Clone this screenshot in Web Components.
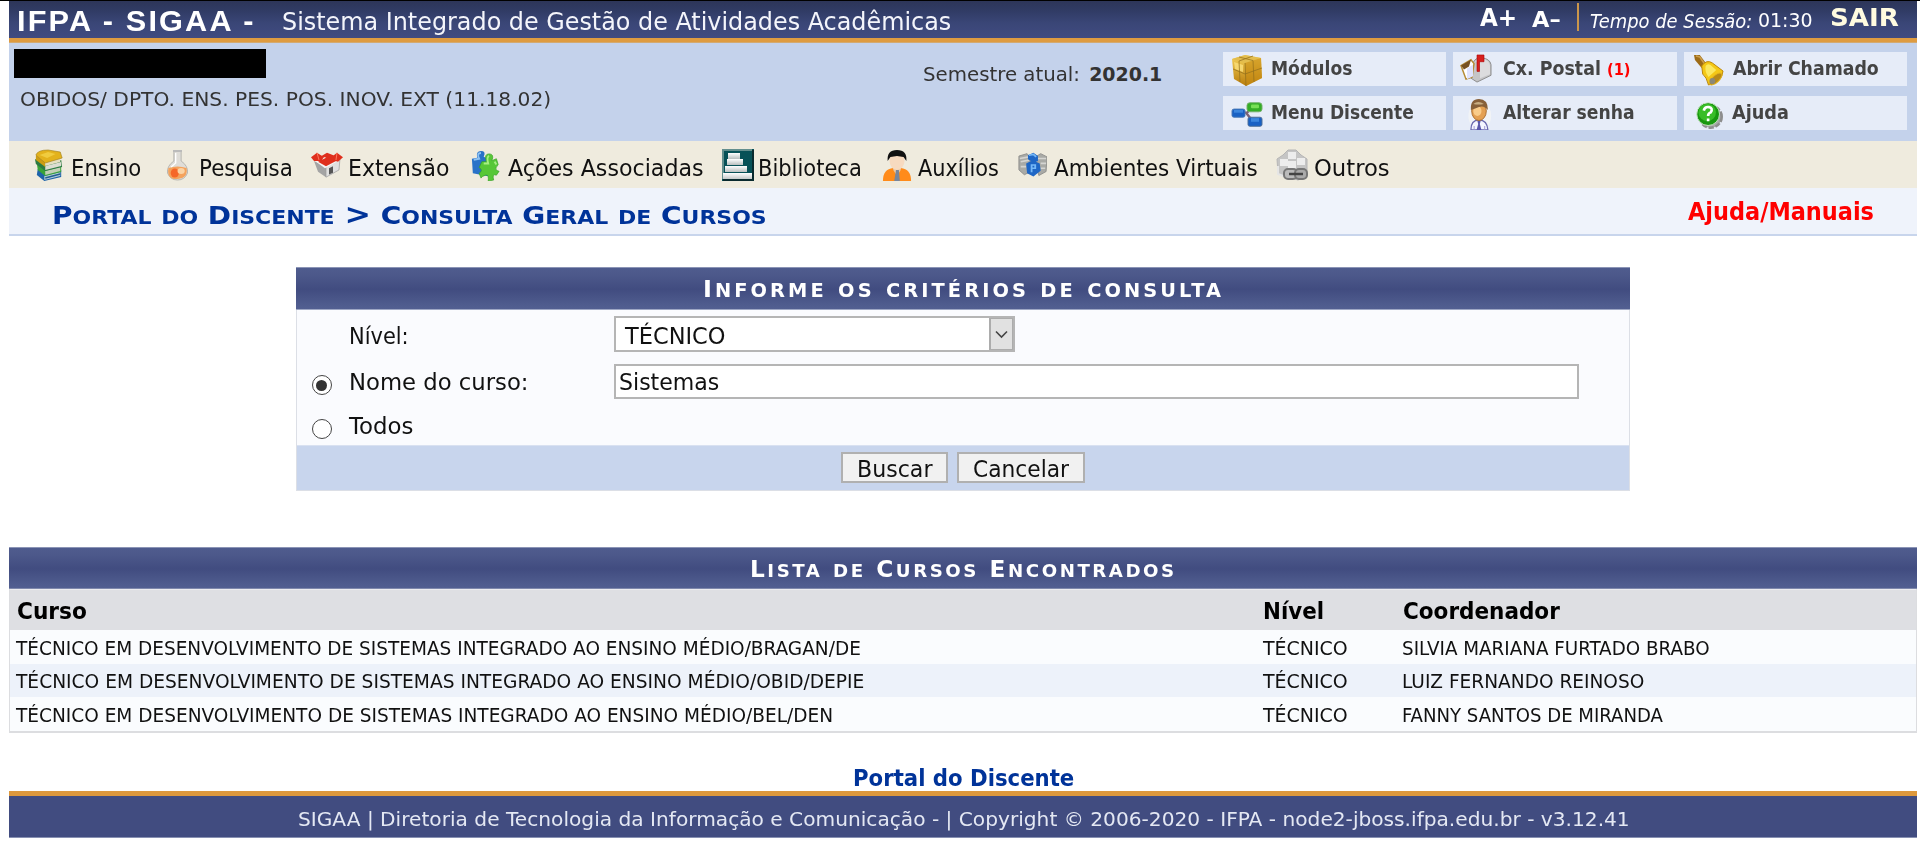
<!DOCTYPE html>
<html lang="pt-BR">
<head>
<meta charset="utf-8">
<title>SIGAA - Consulta Geral de Cursos</title>
<style>
html,body{margin:0;padding:0;background:#fff;overflow:hidden}
body{font-family:"DejaVu Sans",Verdana,sans-serif;color:#111}
</style>
</head>
<body>
<sigaa-page></sigaa-page>
<script>
// Text run with a fixed width: b = baseline inside the row, s = size, w = width, l = gap before.
class FitText extends HTMLElement{
  constructor(){super();this.attachShadow({mode:'open'}).innerHTML=`<style>
  :host{display:block;flex:none;white-space:nowrap}
  span{display:inline-block;transform-origin:0 0;white-space:nowrap;vertical-align:top}
  :host([bold]) span{font-weight:bold}
  :host([it]) span{font-style:italic}
  :host([arial]) span{font-family:"Liberation Sans",Arial,sans-serif;letter-spacing:.07em}
  :host([cond]) span{font-family:"DejaVu Sans Condensed","DejaVu Sans",sans-serif}
  </style><span><slot></slot></span>`;}
  connectedCallback(){
    const n=k=>parseFloat(this.getAttribute(k)||0),s=n('s')*1.025,w=n('w')-1.5,t=this.shadowRoot.querySelector('span');
    this.style.cssText+=`width:${w}px;height:${s}px;font-size:${s}px;line-height:${s}px;margin-left:${n('l')+.7}px;margin-right:.8px;margin-top:${n('b')+.6-.846*s}px`;
    t.style.transform=`scaleX(${w/t.offsetWidth})`;
  }
}
// Heading whose lowercase letters are capitals at 80% of the size.
class CapsTitle extends HTMLElement{
  constructor(){super();this.attachShadow({mode:'open'});}
  connectedCallback(){
    const words=this.textContent.trim().split(' ').map(w=>`<i class="${/^[A-Z]/.test(w)?'c':''}">${w.replace('>','&gt;')}</i>`).join(' ');
    const n=k=>parseFloat(this.getAttribute(k)||0),s=n('s'),w=n('w');
    this.shadowRoot.innerHTML=`<style>
    :host{display:block;flex:none;white-space:nowrap;width:${w}px;height:${s}px;margin-left:${n('l')}px;margin-top:${n('b')-.846*s}px}
    div{display:inline-block;transform-origin:0 0;font-size:${s}px;line-height:${s}px;font-weight:bold;letter-spacing:${n('ls')}px;vertical-align:top}
    i{font-style:normal;display:inline-block;font-variant-caps:small-caps;font-size:1.13em;line-height:0}
    .c::first-letter{font-size:.885em}</style><div>${words}</div>`;
    const t=this.shadowRoot.querySelector('div');t.style.transform=`scaleX(${w/(t.offsetWidth-n('ls'))})`;
  }
}
const ICONS={
box:`<defs><linearGradient id="a" x2="0" y2="1"><stop stop-color="#f6d35c"/><stop offset="1" stop-color="#b87c0c"/></linearGradient></defs><path d="M1 5 14 1 30 4 31 24 15 32 3 25Z" fill="url(#a)"/><path d="M1 5 14 1 30 4 14 9Z" fill="#e3bd4e"/><path d="M14 9 30 4 31 24 15 32Z" fill="#c68b12" opacity=".6"/><path d="M3 8 12 11 12 18 4 15Z" fill="#fbe07c" opacity=".8"/><path d="M14 9 15 32M2 15 14 20 31 14M8 3 22 6.500 23 28M22 2 8 7 9 28" fill="none" stroke="#94701c" stroke-width="1" opacity=".75"/>`,
tree:`<path d="M12 14H16L21 9M15 14 22 24" fill="none" stroke="#7b6478" stroke-width="2.500"/><rect x="1" y="10" width="13" height="9" rx="2" fill="#1961c4" stroke="#4b79b6"/><rect x="3" y="11" width="9" height="3" fill="#3c86dd"/><rect x="16" y="3" width="15" height="10" rx="3" fill="#34ad26" stroke="#73af6a"/><rect x="20" y="5" width="8" height="4" rx="1" fill="#77df55"/><rect x="17" y="19" width="14" height="10" rx="2" fill="#1961c4" stroke="#516f96"/><rect x="20" y="20" width="8" height="4" fill="#3c86dd"/>`,
mail:`<path d="M13 10Q16 4 22 5Q30 6 31 12V23L17 30 11 26Z" fill="#c5c5c7" stroke="#8c8c8c"/><path d="M22 6Q29 7 30 13V22L20 26V14Q19 9 15 9Q18 5 22 6Z" fill="#dcdcde"/><path d="M1 13 11 7 14 11 12 25 6 27Z" fill="#fff" stroke="#b58b36" stroke-width="1.500"/><path d="M1 13 11 7 9 14 4 17Z" fill="#765022"/><path d="M7 16 13 12 13 24 7 27Z" fill="#dfe3ff"/><path d="M17 19V2H24V9H19.500V19Z" fill="#d71f1d" stroke="#a00" stroke-width=".6"/>`,
user:`<ellipse cx="17" cy="18" rx="14" ry="14" fill="#f7f7f4" opacity=".65"/><path d="M6 32Q6 22 16 22T27 32Z" fill="#f4f5ff" stroke="#6a68ae" stroke-width="1.500"/><path d="M14 23H18L17 26 19 32H13L15 26Z" fill="#5b58ac"/><path d="M10 28V32M23 28V32" stroke="#9693d0"/><ellipse cx="16" cy="13" rx="9" ry="9.500" fill="#e4a052" stroke="#a66a2c"/><ellipse cx="14" cy="13" rx="5" ry="5" fill="#f9cc8a"/><path d="M6 12Q5 1 16 1T27 12Q22 7 16 9T6 12Z" fill="#876039"/><path d="M9 6Q15 2 22 6 15 7 9 6Z" fill="#c7ad83"/>`,
bell:`<path d="M1 1 7 1 14 10 9 14 2 6Z" fill="#9d6b17"/><path d="M3 2 7 3 12 10" fill="none" stroke="#cda04c" stroke-width="1.500"/><path d="M9 12Q14 5 20 9L31 17Q30 28 16 31Q14 23 10 20Z" fill="#f4c816" stroke="#bb850b"/><path d="M13 12Q15 9 18 11L24 16 16 23Q12 18 13 12Z" fill="#fbe860"/><ellipse cx="23.500" cy="25" rx="8" ry="3.500" transform="rotate(-42 23.500 25)" fill="#b78a18" stroke="#e3b21d"/><ellipse cx="20" cy="27" rx="3" ry="3" fill="#8b8878"/>`,
help:`<circle cx="18" cy="18" r="12.500" fill="#aaa"/><circle cx="18" cy="18" r="12.500" fill="none" stroke="#8d8d8d" stroke-width="3" stroke-dasharray="6 2"/><circle cx="15" cy="15" r="13" fill="#18970f" stroke="#d5ead2"/><ellipse cx="14" cy="13" rx="10" ry="10" fill="#38bd27"/><path d="M10 11Q11 6 16 7T18 13Q15 14 15 17M15 20V23" fill="none" stroke="#fff" stroke-width="3"/>`,
books:`<path d="M4 20 15 25 29 21V28L11 32 3 26Z" fill="#1e63a9"/><path d="M11 27 28 23V27L11 31Z" fill="#b4cbd6"/><path d="M12 29 28 25" stroke="#225f91" stroke-width="1.500"/><path d="M3 14 14 20 29 16V23L12 27 4 21Z" fill="#39a33a"/><path d="M12 22 28 18V22L12 26Z" fill="#c2cfb6"/><path d="M1 10 13 16 29 11 30 18 12 22 2 15Z" fill="#2c7a42"/><path d="M12 17 29 13V17L12 21Z" fill="#dcddd2"/><path d="M2 6 12 13V18L2 11Z" fill="#cc9d14"/><path d="M12 13 28 9V13L12 17Z" fill="#e5dfc2"/><path d="M2 6Q4 1 15 1L28 3 30 9 12 14Z" fill="#e3b21c" stroke="#a48422" stroke-width=".7"/><path d="M6 6 15 3 23 5 14 9Z" fill="#f0cc3f"/>`,
flask:`<path d="M12 2H20V12Q28 17 27 24Q24 31 16 31T5 24Q4 17 12 12Z" fill="#dfddd8" stroke="#b5b3ae" stroke-width="1"/><path d="M6 19Q16 16 26 19Q28 29 16 30T6 19Z" fill="#f4a25c"/><circle cx="13" cy="24" r="4.500" fill="#f5571c" opacity=".8"/><ellipse cx="20" cy="22" rx="4" ry="3" fill="#fbd3a4"/><path d="M11 2H21" stroke="#bbb" stroke-width="2"/><path d="M14 4V14L9 18" fill="none" stroke="#fff" stroke-width="1.500"/>`,
house:`<path d="M3 12 15 18V30L7 24Z" fill="#a4a4a4"/><path d="M15 16 29 9 28 22 15 30Z" fill="#e0e0e0" stroke="#999" stroke-width=".7"/><path d="M4 12 15 8 27 12 14 20Z" fill="#f5f5f5"/><path d="M0 8 6 3 13 8 10 12 3 12ZM10 7 16 3 23 6 20 10ZM18 10 26 3 32 8 27 13ZM7 13 16 8 25 12 15 18Z" fill="#df2f1d"/><path d="M6 3 8 11M26 3 25 11" stroke="#ff7a60"/><path d="M18 20 22 18V25L18 27Z" fill="#555"/>`,
puzzle:`<path d="M1 9 7 8Q5 1 11 1T14 7L19 9V27L2 24Z" fill="#2972c8"/><path d="M3 10 9 9Q6 3 11 3" fill="none" stroke="#8ec2f2" stroke-width="2"/><path d="M12 12 17 12Q14 4 20 4T23 11L28 9 30 15Q26 19 28 21L31 22 28 26Q23 24 25 31L19 32Q20 25 16 26T11 29L9 24Q14 21 9 18Z" fill="#57c737" stroke="#32a022" stroke-width=".7"/><path d="M14 14 19 14Q17 7 20 6M26 12 28 15" fill="none" stroke="#a7ef83" stroke-width="2"/>`,
biblio:`<defs><linearGradient id="g" x2="0" y2="1"><stop stop-color="#fff"/><stop offset="1" stop-color="#b9bfbf"/></linearGradient></defs><path d="M0 0H32V32H0Z" fill="#075157"/><path d="M0 0H30V2H2V30H0Z" fill="#638e8d"/><rect x="6" y="4" width="12" height="6" fill="url(#g)"/><rect x="5" y="10" width="16" height="6" fill="url(#g)"/><rect x="3" y="17" width="22" height="6" fill="url(#g)"/><rect x="1" y="24" width="29" height="7" fill="url(#g)"/><path d="M31 1V31H1" fill="none" stroke="#092a2e" stroke-width="2"/>`,
aux:`<path d="M1 32Q1 20 12 19H20Q31 20 31 32Z" fill="#ff8b1a"/><path d="M12 14H20V21L16 27 12 21Z" fill="#e9c6a2"/><path d="M15 21H18L19 32H13Z" fill="#78869d"/><ellipse cx="16" cy="12" rx="8" ry="9" fill="#f7dac0"/><path d="M6 12Q5 1 16 1T26 12L23 8 16 7 9 8Z" fill="#111"/>`,
virtual:`<path d="M1 5 10 2 14 8V24L7 28 1 22ZM18 7 25 2 32 6 31 24 23 29Z" fill="#a9aaa6" stroke="#8b8b88"/><path d="M2 8 12 6M3 12 12 10M3 18H9M22 8H31M25 14H31M25 20H30" stroke="#d5d5d2" stroke-width="2"/><path d="M11 4 17 1 22 5V11L17 13 11 9ZM9 14 16 10 24 14 25 23 17 30 10 26Z" fill="#1e66c5"/><path d="M12 4 17 3 20 6M15 25V16H19V20H16" fill="none" stroke="#75b8f7" stroke-width="2"/>`,
outros:`<path d="M1 10 7 6 12 1H20L25 6 31 10V27L22 31 2 25Z" fill="#c5c5c5" stroke="#b5b5b5"/><path d="M4 10H12V17H4ZM12 3H20V10H12ZM21 9H29V16H21ZM12 12H20V19H12Z" fill="#ededed"/><path d="M2 17V25L10 28" stroke="#e5e5e5" fill="none" stroke-width="2"/><rect x="8" y="20" width="13" height="10" rx="4" fill="#bbb" stroke="#777" stroke-width="2"/><rect x="19" y="20" width="12" height="10" rx="4" fill="#aaa" stroke="#777" stroke-width="2"/><path d="M13 25H27" stroke="#444" stroke-width="2.500"/>`};
// Icon with its box: x gap before (l), top (t), width and height.
class SgIcon extends HTMLElement{
  constructor(){super();this.attachShadow({mode:'open'});}
  connectedCallback(){const g=k=>this.getAttribute(k)||0;
  this.shadowRoot.innerHTML=`<style>:host{display:block;flex:none;margin-left:${g('l')}px;margin-top:${g('t')}px;width:${g('w')}px;height:${g('h')}px}svg{display:block;filter:blur(.4px)}</style><svg width="${g('w')}" height="${g('h')}" viewBox="0 0 32 32" preserveAspectRatio="none">${ICONS[g('name')]}</svg>`;}
}
const row='display:flex;align-items:flex-start;box-sizing:border-box;overflow:hidden;';
const define=(name,css,html)=>customElements.define(name,class extends HTMLElement{constructor(){super();const t=document.createElement('template');t.innerHTML=`<style>${css}</style>${html}`;this.attachShadow({mode:'open'}).append(t.content.cloneNode(true));}});
customElements.define('fit-text',FitText);customElements.define('caps-title',CapsTitle);customElements.define('sg-icon',SgIcon);

define('top-bar',`:host{${row}height:37px;background:linear-gradient(#2d3659,#303b64 25%,#3a4677 60%,#404b80);color:#fff}
.sep{flex:none;width:1.500px;height:28px;margin:2px 0 0 16px;background:#cb964b}.sair{color:#fffbe0}`,
`<fit-text arial bold s="28" b="29.500" l="7" w="240">IFPA - SIGAA -</fit-text>
<fit-text s="24" b="29.500" l="25" w="671" style="color:#f4f5fb">Sistema Integrado de Gestão de Atividades Acadêmicas</fit-text>
<fit-text bold s="24" b="25.500" l="527.500" w="39">A+</fit-text><fit-text bold s="20" b="25.500" l="13" w="30">A–</fit-text>
<div class="sep"></div><fit-text it s="18.500" b="26" l="10" w="164">Tempo de Sessão:</fit-text><fit-text s="19" b="26" l="4.500" w="56">01:30</fit-text>
<fit-text class="sair" bold cond s="24" b="25.500" l="16" w="70">SAIR</fit-text>`);

define('quick-link',`:host{${row}height:34px;background:#e6ecf8;color:#444}`,`<slot></slot>`);
define('user-panel',`:host{${row}height:98px;background:#c4d2eb;color:#333}
.id{width:908px;flex:none}.mask{width:252px;height:29px;margin:6px 0 0 5px;background:#000}.unit{height:40px;display:flex}
.links{display:grid;grid-template-columns:223px 224.500px 223px;column-gap:7px;row-gap:10px;margin:9px 0 0 60px}`,
`<div class="id"><div class="mask"></div><div class="unit"><fit-text s="18.500" b="27" l="10" w="533">OBIDOS/ DPTO. ENS. PES. POS. INOV. EXT (11.18.02)</fit-text></div></div>
<fit-text s="18.500" b="37" l="5.500" w="159">Semestre atual:</fit-text><fit-text bold s="18.500" b="37" l="7" w="74.500">2020.1</fit-text>
<div class="links">
<quick-link><sg-icon name="box" l="8" t="2" w="32" h="32"></sg-icon><fit-text cond bold s="19" b="22.500" l="7" w="83">Módulos</fit-text></quick-link>
<quick-link><sg-icon name="mail" l="7" t="1" w="32" h="31"></sg-icon><fit-text cond bold s="19" b="22.500" l="10.500" w="99">Cx. Postal</fit-text><fit-text cond bold s="15.500" b="22.500" l="5" w="25" style="color:#f00">(1)</fit-text></quick-link>
<quick-link><sg-icon name="bell" l="9" t="2" w="31" h="32"></sg-icon><fit-text cond bold s="19" b="22.500" l="7.500" w="147">Abrir Chamado</fit-text></quick-link>
<quick-link><sg-icon name="tree" l="8" t="4" w="32" h="29"></sg-icon><fit-text cond bold s="19" b="22.500" l="7" w="144">Menu Discente</fit-text></quick-link>
<quick-link><sg-icon name="user" l="13" t="2" w="26" h="32"></sg-icon><fit-text cond bold s="19" b="22.500" l="10.500" w="133">Alterar senha</fit-text></quick-link>
<quick-link><sg-icon name="help" l="11" t="5" w="28" h="28"></sg-icon><fit-text cond bold s="19" b="22.500" l="8" w="58">Ajuda</fit-text></quick-link>
</div>`);

define('menu-bar',`:host{${row}height:47px;background:#efebde;color:#111}`,
`<sg-icon name="books" l="25" t="8" w="30" h="32"></sg-icon><fit-text s="22" b="34" l="6.500" w="72">Ensino</fit-text>
<sg-icon name="flask" l="20.500" t="8" w="29" h="32"></sg-icon><fit-text s="22" b="34" l="6.500" w="95.500">Pesquisa</fit-text>
<sg-icon name="house" l="17" t="9" w="32" h="29"></sg-icon><fit-text s="22" b="34" l="4" w="103">Extensão</fit-text>
<sg-icon name="puzzle" l="21" t="9" w="29" h="31"></sg-icon><fit-text s="22" b="34" l="7" w="197">Ações Associadas</fit-text>
<sg-icon name="biblio" l="18" t="8" w="32" h="32"></sg-icon><fit-text s="22" b="34" l="3.500" w="105">Biblioteca</fit-text>
<sg-icon name="aux" l="19.500" t="8" w="30" h="32"></sg-icon><fit-text s="22" b="34" l="5" w="82">Auxílios</fit-text>
<sg-icon name="virtual" l="19" t="11" w="29" h="26"></sg-icon><fit-text s="22" b="34" l="6.500" w="205">Ambientes Virtuais</fit-text>
<sg-icon name="outros" l="18" t="8" w="32" h="32"></sg-icon><fit-text s="22" b="34" l="5" w="77">Outros</fit-text>`);

define('page-title',`:host{${row}height:48px;background:#eff3fb;border-bottom:2px solid #c8d5ec;color:#039}`,
`<caps-title s="25.500" b="37" l="43" w="715">Portal do Discente &gt; Consulta Geral de Cursos</caps-title><fit-text cond bold s="24" b="32.500" l="920" w="187" style="color:#f00">Ajuda/Manuais</fit-text>`);

define('search-form',`:host{display:block;width:1334px;height:224px;margin:31px 0 0 286.500px;box-sizing:border-box;border:1px solid #dcdfe6;border-top:0;background:#fafbfe}
.h,.r,.f{${row}}.h{height:43px;margin:0 -1px;background:linear-gradient(#4f5c8e,#4d598b 15%,#414c80 52%,#4f5c8e 90%,#525f91);border-top:1px solid #8b94b5;border-bottom:1px solid #9ea7c4;color:#fff}
.r{overflow:visible}.sel,.inp{display:flex;align-items:flex-start;flex:none;box-sizing:border-box;background:#fff;border:2px solid #b5b5b5}
.sel{width:401.500px;height:36px;margin-top:6px}.inp{width:965px;height:35px;margin-top:6px}
.arr{margin-left:auto;width:24px;height:32px;box-sizing:border-box;background:#e1e1e1;border:2px solid #acacac;border-width:1px 1px 1px 2px;display:grid;place-items:center}
.rad{flex:none;width:20px;height:20px;box-sizing:border-box;border:1.700px solid #444;border-radius:50%;margin-left:15px;background:#fff;display:grid;place-items:center}
.rad i{width:11px;height:11px;border-radius:50%;background:#333}
.f{height:44.500px;background:#c8d5ed;border-top:1px solid #d9e1f1}
.btn{display:flex;flex:none;align-items:flex-start;box-sizing:border-box;height:31px;margin-top:6px;border:2px solid #b0b0b0;background:#f1f1f1;color:#111}`,
`<div class="h"><caps-title s="23.500" b="30" l="407" w="518" ls="3">Informe os critérios de consulta</caps-title></div>
<div class="r" style="height:48px"><fit-text s="22.500" b="33.500" l="52" w="61.500">Nível:</fit-text><div class="sel" style="margin-left:204px"><fit-text s="22.500" b="26" l="8" w="102">TÉCNICO</fit-text><div class="arr"><svg width="13" height="9"><path d="M1 1.500 6.500 7 12 1.500" fill="none" stroke="#444" stroke-width="1.600"/></svg></div></div></div>
<div class="r" style="height:45px"><div class="rad" style="margin-top:17px"><i></i></div><fit-text s="22.500" b="32" l="17" w="181">Nome do curso:</fit-text><div class="inp" style="margin-left:84.500px"><fit-text s="22.500" b="24" l="2" w="102">Sistemas</fit-text></div></div>
<div class="r" style="height:42px"><div class="rad" style="margin-top:16px"></div><fit-text s="22.500" b="31" l="17" w="66">Todos</fit-text></div>
<div class="f"><div class="btn" style="width:107px;margin-left:544px"><fit-text s="22" b="22.500" l="13.500" w="77">Buscar</fit-text></div><div class="btn" style="width:128px;margin-left:9px"><fit-text s="22" b="22.500" l="14" w="97">Cancelar</fit-text></div></div>`);

define('course-list',`:host{display:block;margin-top:56px;height:186px;box-sizing:border-box;border:1px solid #dcdde0;border-top:0;border-bottom-width:2px;background:#fafcfe}
.h,.t,.r{${row}}.h{height:42px;margin:0 -1px;background:linear-gradient(#4f5c8e,#4d598b 15%,#414c80 52%,#4f5c8e 90%,#525f91);border-top:1px solid #8b94b5;border-bottom:1px solid #7f89ac;color:#fff}
.t{height:41px;background:#dedfe3;border-top:1px solid #ececef;color:#000}.r{height:34px;color:#111}.r>div,.t>div{flex:none}.n{width:1245px}.v{width:139.500px}.alt{background:#edf2fa;height:33px}`,
`<div class="h"><caps-title s="23" b="29" l="741" w="424" ls="2.500">Lista de Cursos Encontrados</caps-title></div>
<div class="t"><div class="n"><fit-text cond bold s="23" b="29" l="6" w="71">Curso</fit-text></div><div class="v"><fit-text cond bold s="23" b="29" l="7" w="62">Nível</fit-text></div><div><fit-text cond bold s="23" b="29" l="7.500" w="158">Coordenador</fit-text></div></div>
<div class="r"><div class="n"><fit-text cond s="19" b="25" l="5.500" w="846">TÉCNICO EM DESENVOLVIMENTO DE SISTEMAS INTEGRADO AO ENSINO MÉDIO/BRAGAN/DE</fit-text></div><div class="v"><fit-text cond s="19" b="25" l="7.500" w="86">TÉCNICO</fit-text></div><div><fit-text cond s="19" b="25" l="7" w="309">SILVIA MARIANA FURTADO BRABO</fit-text></div></div>
<div class="r alt"><div class="n"><fit-text cond s="19" b="24" l="5.500" w="850">TÉCNICO EM DESENVOLVIMENTO DE SISTEMAS INTEGRADO AO ENSINO MÉDIO/OBID/DEPIE</fit-text></div><div class="v"><fit-text cond s="19" b="24" l="7.500" w="86">TÉCNICO</fit-text></div><div><fit-text cond s="19" b="24" l="7" w="244">LUIZ FERNANDO REINOSO</fit-text></div></div>
<div class="r"><div class="n"><fit-text cond s="19" b="25" l="5.500" w="819">TÉCNICO EM DESENVOLVIMENTO DE SISTEMAS INTEGRADO AO ENSINO MÉDIO/BEL/DEN</fit-text></div><div class="v"><fit-text cond s="19" b="25" l="7.500" w="86">TÉCNICO</fit-text></div><div><fit-text cond s="19" b="25" l="7" w="262">FANNY SANTOS DE MIRANDA</fit-text></div></div>`);

define('page-footer',`:host{display:block}.p,.f{${row}}.p{height:58px;color:#039}.f{height:47px;border-top:5px solid #dd983c;border-bottom:1px solid #8790b2;background:#414c80;color:#e4e8f3}`,
`<div class="p"><fit-text cond bold s="23" b="53" l="843" w="223">Portal do Discente</fit-text></div><div class="f"><fit-text s="18.500" b="29" l="288" w="1333">SIGAA | Diretoria de Tecnologia da Informação e Comunicação - | Copyright © 2006-2020 - IFPA - node2-jboss.ifpa.edu.br - v3.12.41</fit-text></div>`);

define('sigaa-page',`:host{display:block;width:1920px;height:841px;overflow:hidden}.top{height:1px;background:#000}main{margin:0 3px 0 9px}.o{height:5px;background:linear-gradient(#de9b40 80%,#c9b9a0)}`,
`<div class="top"></div><main><top-bar></top-bar><div class="o"></div><user-panel></user-panel><menu-bar></menu-bar><page-title></page-title><search-form></search-form><course-list></course-list><page-footer></page-footer></main>`);
</script>
</body>
</html>
